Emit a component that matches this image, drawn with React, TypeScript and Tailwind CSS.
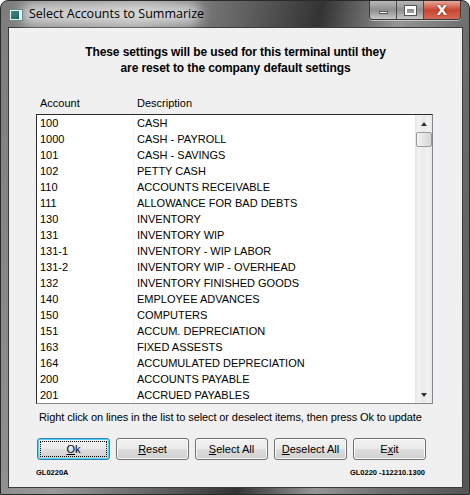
import { ReactNode } from "react";

const accounts: [string, string][] = [
  ["100", "CASH"],
  ["1000", "CASH - PAYROLL"],
  ["101", "CASH - SAVINGS"],
  ["102", "PETTY CASH"],
  ["110", "ACCOUNTS RECEIVABLE"],
  ["111", "ALLOWANCE FOR BAD DEBTS"],
  ["130", "INVENTORY"],
  ["131", "INVENTORY WIP"],
  ["131-1", "INVENTORY - WIP LABOR"],
  ["131-2", "INVENTORY WIP - OVERHEAD"],
  ["132", "INVENTORY FINISHED GOODS"],
  ["140", "EMPLOYEE ADVANCES"],
  ["150", "COMPUTERS"],
  ["151", "ACCUM. DEPRECIATION"],
  ["163", "FIXED ASSESTS"],
  ["164", "ACCUMULATED DEPRECIATION"],
  ["200", "ACCOUNTS PAYABLE"],
  ["201", "ACCRUED PAYABLES"],
];

function TitleBar() {
  return (
    <div className="relative h-[26px] shrink-0 flex items-center">
      {/* app icon */}
      <div className="ml-[8px] mt-[1px] w-[14px] h-[12px] bg-[#e8f0f0] border border-[#6a8a8a] flex items-center justify-start p-[1px]">
        <div className="w-[8px] h-[8px] bg-gradient-to-br from-[#3f8f8a] to-[#1f5f5a]" />
      </div>
      <div className="ml-[6px] text-[12.5px] text-black font-['Open_Sans',sans-serif] leading-none">
        Select Accounts to Summarize
      </div>
      {/* caption buttons */}
      <div className="absolute right-[8px] top-0 flex h-[19px] rounded-b-[4px] border border-t-0 border-[#3b3b3b] overflow-hidden shadow-[0_1px_0_rgba(255,255,255,0.5)]">
        <div className="w-[27px] h-full border-r border-[#4a4a4a] bg-gradient-to-b from-[#b8b8b8] via-[#8e8e8e] to-[#c8c8c8] flex items-center justify-center">
          <div className="w-[9px] h-[3px] mt-[4px] bg-white border border-[#555]" />
        </div>
        <div className="w-[27px] h-full border-r border-[#4a4a4a] bg-gradient-to-b from-[#b8b8b8] via-[#8e8e8e] to-[#c8c8c8] flex items-center justify-center">
          <div className="w-[11px] h-[9px] border-2 border-white border-t-[3px] outline outline-1 outline-[#555]" />
        </div>
        <div className="w-[36px] h-full bg-gradient-to-b from-[#e8a79c] via-[#c8452f] to-[#d46a55] flex items-center justify-center">
          <span className="text-white font-bold text-[14px] leading-none font-['DejaVu_Sans',sans-serif] [text-shadow:0_0_2px_#600]">
            X
          </span>
        </div>
      </div>
    </div>
  );
}

function VistaButton({ children, focused }: { children: ReactNode; focused?: boolean }) {
  return (
    <div
      className={`w-[73px] h-[22px] rounded-[3px] border ${
        focused ? "border-[#3c7fb1] shadow-[inset_0_0_0_1px_#48d4fb]" : "border-[#707070] shadow-[inset_0_0_0_1px_#fbfbfb]"
      } bg-[linear-gradient(to_bottom,#f2f2f2_0%,#ebebeb_50%,#dddddd_51%,#cfcfcf_100%)] flex items-center justify-center p-[2px]`}
    >
      <div
        className={`w-full h-full flex items-center justify-center text-[11px] text-black ${
          focused ? "border border-dotted border-black" : ""
        }`}
      >
        {children}
      </div>
    </div>
  );
}

function ScrollBar() {
  return (
    <div className="w-[17px] h-full shrink-0 bg-[linear-gradient(to_right,#e6e6e6,#f2f2f2_20%,#eaeaea_50%,#f2f2f2_80%,#e6e6e6)] flex flex-col items-center">
      <div className="h-[17px] w-full flex items-center justify-center">
        <div className="w-0 h-0 border-l-[3px] border-r-[3px] border-b-[4px] border-l-transparent border-r-transparent border-b-[#333]" />
      </div>
      <div className="w-[16px] h-[15px] rounded-[2px] border border-[#9a9a9a] bg-[linear-gradient(to_right,#f4f4f4,#e4e4e4_50%,#d6d6d6)]" />
      <div className="flex-1" />
      <div className="h-[17px] w-full flex items-center justify-center">
        <div className="w-0 h-0 border-l-[3px] border-r-[3px] border-t-[4px] border-l-transparent border-r-transparent border-t-[#333]" />
      </div>
    </div>
  );
}

export default function App() {
  return (
    <div className="w-[470px] h-[495px] overflow-hidden rounded-t-[8px] border border-[#2a2a2a] flex flex-col bg-[linear-gradient(100deg,#7c7c7c_0%,#9a9a9a_25%,#5e5e5e_45%,#333333_58%,#959595_72%,#6e6e6e_85%,#555555_100%)] font-['Liberation_Sans',Arial,sans-serif]">
      <div className="relative">
        <div className="absolute left-[20px] top-[2px] w-[180px] h-[22px] rounded-full bg-white/60 blur-[6px]" />
        <div className="relative">
          <TitleBar />
        </div>
      </div>

      <div className="flex-1 ml-[7px] mr-[6px] mb-[6px] border border-[#3c3c3c] bg-[#f0f0f0] flex flex-col">
        <div className="pt-[16px] text-center font-bold text-[12px] leading-[16px] text-black tracking-[-0.1px]">
          <div>These settings will be used for this terminal until they</div>
          <div>are reset to the company default settings</div>
        </div>

        <div className="mt-[20px] ml-[27px] flex text-[11px] leading-[14px] text-black">
          <div className="w-[101px] pl-[4px]">Account</div>
          <div>Description</div>
        </div>

        <div className="mt-[4px] ml-[27px] w-[397px] h-[290px] border border-[#828790] border-t-[#2b2b2b] border-l-[#2b2b2b] bg-white flex">
          <div className="flex-1 flex flex-col">
            {accounts.map(([acct, desc]) => (
              <div key={acct} className="h-[16px] flex text-[11px] leading-[16px] text-black">
                <div className="w-[97px] pl-[3px] border-r border-[#f4f4f4]">{acct}</div>
                <div className="pl-[3px]">{desc}</div>
              </div>
            ))}
          </div>
          <ScrollBar />
        </div>

        <div className="mt-[6px] ml-[30px] text-[11px] leading-[14px] text-black whitespace-nowrap tracking-[-0.1px]">
          Right click on lines in the list to select or deselect items, then press Ok to update
        </div>

        <div className="mt-[14px] ml-[28px] flex gap-[6px]">
          <VistaButton focused>
            <span className="underline">O</span>k
          </VistaButton>
          <VistaButton>
            <span className="underline">R</span>eset
          </VistaButton>
          <VistaButton>
            <span className="underline">S</span>elect All
          </VistaButton>
          <VistaButton>
            <span className="underline">D</span>eselect All
          </VistaButton>
          <VistaButton>
            E<span className="underline">x</span>it
          </VistaButton>
        </div>

        <div className="mt-[8px] ml-[27px] w-[389px] flex justify-between text-[7.5px] font-bold leading-[10px] text-black">
          <div>GL0220A</div>
          <div>GL0220 -112210.1300</div>
        </div>
      </div>
    </div>
  );
}
